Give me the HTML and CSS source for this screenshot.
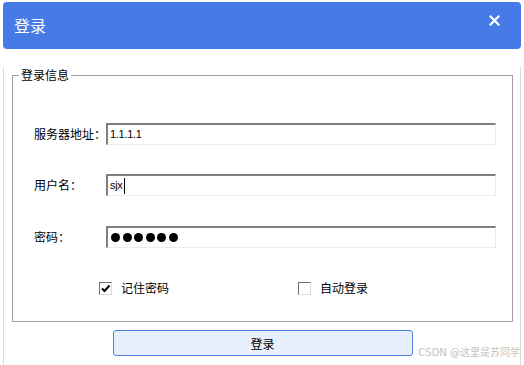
FILE: index.html
```html
<!DOCTYPE html>
<html lang="zh-CN">
<head>
<meta charset="utf-8">
<title>登录</title>
<link rel="stylesheet" href="styles.css">
</head>
<body>
<div class="window">
  <div class="header">
    <span class="title">登录</span>
    <svg class="close" width="11" height="11" viewBox="0 0 11 11">
      <path d="M1.5 1.5 L9.5 9.5 M9.5 1.5 L1.5 9.5" stroke="#fff" stroke-width="2.2" stroke-linecap="square" fill="none"/>
    </svg>
  </div>
  <div class="body">
    <fieldset class="group">
      <legend class="legend">登录信息</legend>
      <div class="row row1">
        <span class="label">服务器地址：</span>
        <div class="field">1.1.1.1</div>
      </div>
      <div class="row row2">
        <span class="label">用户名：</span>
        <div class="field">sjx<span class="caret"></span></div>
      </div>
      <div class="row row3">
        <span class="label">密码：</span>
        <div class="field dots"><span class="dot"></span><span class="dot"></span><span class="dot"></span><span class="dot"></span><span class="dot"></span><span class="dot"></span></div>
      </div>
      <div class="checks">
        <label class="check">
          <span class="box">
            <svg width="11" height="11" viewBox="0 0 11 11"><path d="M2 5.5 L4.5 8 L9.5 2.5" stroke="#000" stroke-width="2" fill="none"/></svg>
          </span>
          <span class="check-text">记住密码</span>
        </label>
        <label class="check">
          <span class="box"></span>
          <span class="check-text">自动登录</span>
        </label>
      </div>
    </fieldset>
    <div class="actions">
      <button class="login-btn">登录</button>
    </div>
  </div>
  <div class="watermark">CSDN @这里是苏同学</div>
</div>
</body>
</html>
```
FILE: styles.css
```css
html, body {
  margin: 0;
  padding: 0;
  background: #fff;
}
body {
  font-family: "Noto Sans CJK SC", "DejaVu Sans", sans-serif;
  font-size: 12px;
  color: #000;
}
.window {
  position: relative;
  width: 524px;
  height: 365px;
  box-sizing: border-box;
  padding: 2px 3px 0 3px;
  overflow: hidden;
}
.header {
  height: 47px;
  background: #467ae6;
  border-radius: 4px;
  display: flex;
  justify-content: space-between;
  align-items: flex-start;
}
.title {
  color: #fff;
  font-size: 16px;
  line-height: 47px;
  padding-left: 11px;
}
.close {
  margin-top: 13px;
  margin-right: 21px;
}
.body {
  border-left: 1px solid #d9d9d9;
  border-right: 1px solid #d9d9d9;
  height: 316px;
  box-sizing: border-box;
  padding: 0 7px 0 8px;
}
.group {
  margin: 18px 0 0 0;
  padding: 0 0 25px 0;
  border: 1px solid #a0a0a0;
  width: 501px;
  box-sizing: border-box;
}
.legend {
  font-size: 12px;
  line-height: 16px;
  padding: 0 2px;
  margin-left: 6px;
}
.row {
  display: flex;
  align-items: center;
  height: 22px;
  padding-left: 21px;
}
.row1 { margin-top: 40px; }
.row2 { margin-top: 29px; }
.row3 { margin-top: 30px; }
.label {
  width: 72px;
  line-height: 16px;
}
.field {
  width: 390px;
  height: 22px;
  box-sizing: border-box;
  border-top: 2px solid #7f7f7f;
  border-left: 2px solid #7f7f7f;
  border-right: 1px solid #ececec;
  border-bottom: 1px solid #ececec;
  font-family: "Liberation Sans", sans-serif;
  font-size: 11px;
  letter-spacing: -0.3px;
  line-height: 19px;
  padding-left: 2px;
  display: flex;
  align-items: center;
}
.caret {
  display: inline-block;
  width: 1px;
  height: 16px;
  background: #000;
  margin-left: 1px;
}
.dots {
  gap: 2.6px;
  padding-left: 3px;
}
.dot {
  width: 9px;
  height: 9px;
  border-radius: 50%;
  background: #000;
}
.checks {
  display: flex;
  margin-top: 32px;
  padding-left: 86px;
  height: 16px;
  align-items: center;
}
.check {
  display: flex;
  align-items: center;
  width: 199px;
}
.box {
  width: 13px;
  height: 13px;
  box-sizing: border-box;
  border-top: 1px solid #6f6f6f;
  border-left: 1px solid #6f6f6f;
  border-right: 1px solid #dcdcdc;
  border-bottom: 1px solid #dcdcdc;
  background: #fff;
  display: flex;
  align-items: center;
  justify-content: center;
}
.check-text {
  margin-left: 9px;
  line-height: 16px;
}
.actions {
  display: flex;
  justify-content: center;
  margin-top: 8px;
}
.login-btn {
  width: 300px;
  height: 26px;
  box-sizing: border-box;
  background: #e8effd;
  border: 1px solid #4a7fe4;
  border-radius: 3px;
  font-family: "Noto Sans CJK SC", sans-serif;
  font-size: 12px;
  color: #000;
  padding: 0;
}
.watermark {
  position: absolute;
  right: 4px;
  bottom: 5px;
  font-size: 10px;
  line-height: 14px;
  color: #c4c4c4;
  font-family: "DejaVu Sans", "Noto Sans CJK SC", sans-serif;
}
```
